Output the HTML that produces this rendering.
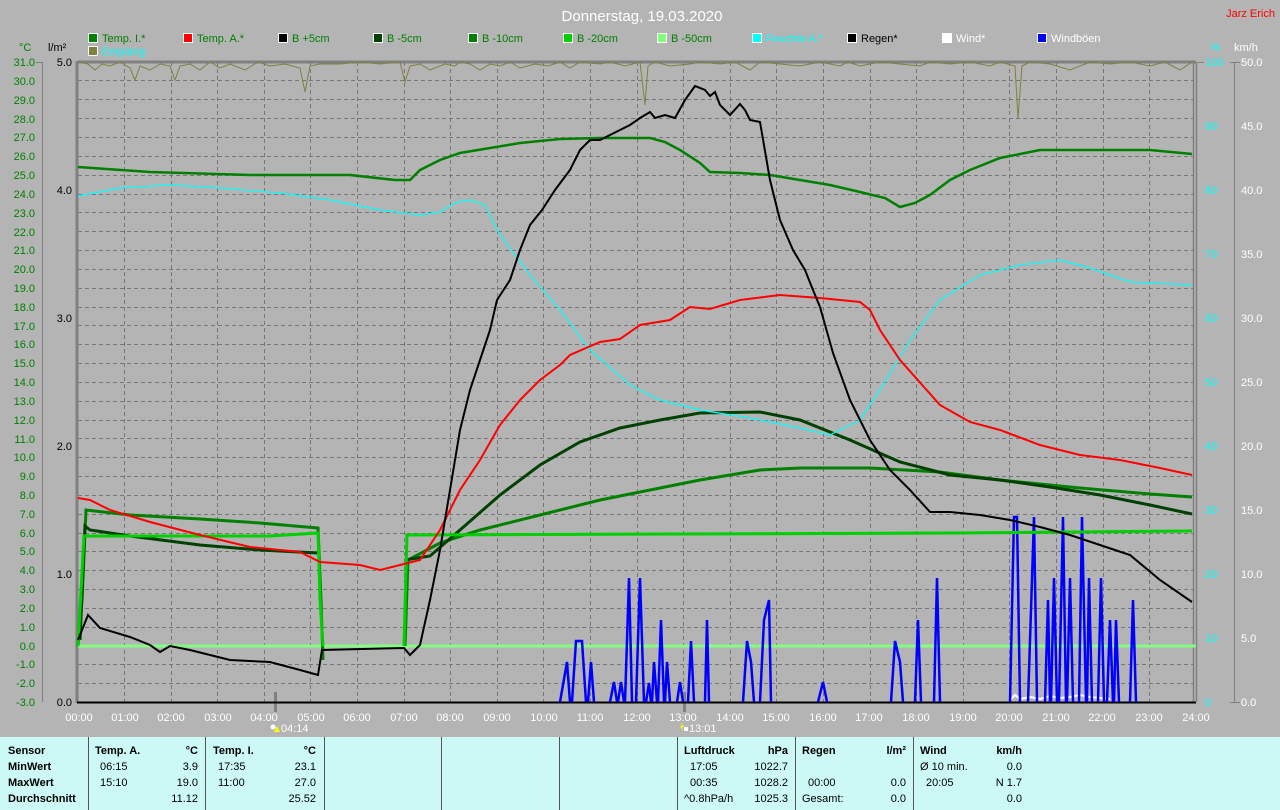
<!DOCTYPE html>
<html><head><meta charset="utf-8"><style>
body{margin:0;width:1280px;height:810px;background:#b4b4b4;overflow:hidden;font-family:"Liberation Sans",sans-serif}
svg{position:absolute;left:0;top:0}
#tbl{position:absolute;left:0;top:737px;width:1280px;height:73px;background:#ccf9f5}
.d{position:absolute;top:0;height:73px;width:1px;background:#555}
.t{position:absolute;font-size:11px;color:#000;white-space:nowrap}
.b{font-weight:bold}
.r{text-align:right}
</style></head><body>
<svg width="1280" height="737" font-family="Liberation Sans, sans-serif" font-size="11">
<text x="642" y="21" fill="#fff" font-size="15" text-anchor="middle">Donnerstag, 19.03.2020</text>
<text x="1275" y="17" fill="#f00" font-size="11" text-anchor="end">Jarz Erich</text>
<g font-size="11">
<rect x="88.5" y="33.5" width="9" height="9" fill="#008000" stroke="#fff"/><text x="102" y="42" fill="#008000">Temp. I.*</text>
<rect x="183.5" y="33.5" width="9" height="9" fill="#f00" stroke="#fff"/><text x="197" y="42" fill="#008000">Temp. A.*</text>
<rect x="278.5" y="33.5" width="9" height="9" fill="#000" stroke="#fff"/><text x="292" y="42" fill="#008000">B +5cm</text>
<rect x="373.5" y="33.5" width="9" height="9" fill="#004000" stroke="#fff"/><text x="387" y="42" fill="#008000">B -5cm</text>
<rect x="468.5" y="33.5" width="9" height="9" fill="#008000" stroke="#fff"/><text x="482" y="42" fill="#008000">B -10cm</text>
<rect x="563.5" y="33.5" width="9" height="9" fill="#00d000" stroke="#fff"/><text x="577" y="42" fill="#008000">B -20cm</text>
<rect x="657.5" y="33.5" width="9" height="9" fill="#80ff80" stroke="#fff"/><text x="671" y="42" fill="#008000">B -50cm</text>
<rect x="752.5" y="33.5" width="9" height="9" fill="#0ff" stroke="#fff"/><text x="766" y="42" fill="#0ff">Feuchte A.*</text>
<rect x="847.5" y="33.5" width="9" height="9" fill="#000" stroke="#fff"/><text x="861" y="42" fill="#000">Regen*</text>
<rect x="942.5" y="33.5" width="9" height="9" fill="#fff" stroke="#fff"/><text x="956" y="42" fill="#fff">Wind*</text>
<rect x="1037.5" y="33.5" width="9" height="9" fill="#00f" stroke="#fff"/><text x="1051" y="42" fill="#fff">Windböen</text>
<rect x="88.5" y="46.5" width="9" height="9" fill="#808040" stroke="#fff"/><text x="102" y="55" fill="#0ff">Emplang</text>
</g>
<text x="19" y="51" fill="#008000">°C</text>
<text x="48" y="51" fill="#000">l/m²</text>
<text x="1211" y="51" fill="#0ff">%</text>
<text x="1234" y="51" fill="#fff">km/h</text>
<!-- grid -->
<g stroke="#777" stroke-dasharray="4,3" stroke-width="1">
<path d="M78 80.5H1193M78 99.5H1193M78 118.5H1193M78 137.5H1193M78 156.5H1193M78 175.5H1193M78 194.5H1193M78 212.5H1193M78 231.5H1193M78 250.5H1193M78 269.5H1193M78 288.5H1193M78 307.5H1193M78 325.5H1193M78 344.5H1193M78 363.5H1193M78 382.5H1193M78 401.5H1193M78 420.5H1193M78 438.5H1193M78 457.5H1193M78 476.5H1193M78 495.5H1193M78 514.5H1193M78 533.5H1193M78 551.5H1193M78 570.5H1193M78 589.5H1193M78 608.5H1193M78 627.5H1193M78 646.5H1193M78 664.5H1193M78 683.5H1193"/>
<path d="M124.5 62V702M171.5 62V702M217.5 62V702M264.5 62V702M310.5 62V702M357.5 62V702M404.5 62V702M450.5 62V702M497.5 62V702M543.5 62V702M590.5 62V702M637.5 62V702M683.5 62V702M730.5 62V702M776.5 62V702M823.5 62V702M870.5 62V702M916.5 62V702M963.5 62V702M1009.5 62V702M1056.5 62V702M1103.5 62V702M1149.5 62V702"/>
</g>
<!-- axes -->
<g stroke="#808080" fill="none">
<path d="M42.5 62V702M36 62.5H42" />
<path d="M77 61V703" stroke-width="3"/>
<path d="M78 62H1196" stroke-width="3"/>
<path d="M1193.5 62V702M1196.5 62V702" stroke-width="1.5"/>
<path d="M1234.5 62V702M1230 62.5H1240M1230 702.5H1240M1198 62.5H1204"/>
<path d="M275.5 692V712M684.5 692V712" stroke-width="3"/>
</g>
<path d="M77 702.5H1196" stroke="#000" stroke-width="2"/>
<!-- left labels -->
<g fill="#008000" text-anchor="end">
<text x="35" y="66">31.0</text><text x="35" y="85">30.0</text><text x="35" y="104">29.0</text><text x="35" y="123">28.0</text><text x="35" y="141">27.0</text><text x="35" y="160">26.0</text><text x="35" y="179">25.0</text><text x="35" y="198">24.0</text><text x="35" y="217">23.0</text><text x="35" y="236">22.0</text><text x="35" y="254">21.0</text><text x="35" y="273">20.0</text><text x="35" y="292">19.0</text><text x="35" y="311">18.0</text><text x="35" y="330">17.0</text><text x="35" y="348">16.0</text><text x="35" y="367">15.0</text><text x="35" y="386">14.0</text><text x="35" y="405">13.0</text><text x="35" y="424">12.0</text><text x="35" y="443">11.0</text><text x="35" y="461">10.0</text><text x="35" y="480">9.0</text><text x="35" y="499">8.0</text><text x="35" y="518">7.0</text><text x="35" y="537">6.0</text><text x="35" y="555">5.0</text><text x="35" y="574">4.0</text><text x="35" y="593">3.0</text><text x="35" y="612">2.0</text><text x="35" y="631">1.0</text><text x="35" y="650">0.0</text><text x="35" y="668">-1.0</text><text x="35" y="687">-2.0</text><text x="35" y="706">-3.0</text>
</g>
<g fill="#000" text-anchor="end">
<text x="72" y="66">5.0</text><text x="72" y="194">4.0</text><text x="72" y="322">3.0</text><text x="72" y="450">2.0</text><text x="72" y="578">1.0</text><text x="72" y="706">0.0</text>
</g>
<g fill="#0ff">
<text x="1205" y="66">100</text><text x="1205" y="130">90</text><text x="1205" y="194">80</text><text x="1205" y="258">70</text><text x="1205" y="322">60</text><text x="1205" y="386">50</text><text x="1205" y="450">40</text><text x="1205" y="514">30</text><text x="1205" y="578">20</text><text x="1205" y="642">10</text><text x="1205" y="706">0</text>
</g>
<g fill="#fff">
<text x="1241" y="66">50.0</text><text x="1241" y="130">45.0</text><text x="1241" y="194">40.0</text><text x="1241" y="258">35.0</text><text x="1241" y="322">30.0</text><text x="1241" y="386">25.0</text><text x="1241" y="450">20.0</text><text x="1241" y="514">15.0</text><text x="1241" y="578">10.0</text><text x="1241" y="642">5.0</text><text x="1241" y="706">0.0</text>
</g>
<g fill="#fff" text-anchor="middle">
<text x="79" y="721">00:00</text><text x="125" y="721">01:00</text><text x="171" y="721">02:00</text><text x="218" y="721">03:00</text><text x="264" y="721">04:00</text><text x="311" y="721">05:00</text><text x="357" y="721">06:00</text><text x="404" y="721">07:00</text><text x="450" y="721">08:00</text><text x="497" y="721">09:00</text><text x="544" y="721">10:00</text><text x="590" y="721">11:00</text><text x="637" y="721">12:00</text><text x="683" y="721">13:00</text><text x="730" y="721">14:00</text><text x="776" y="721">15:00</text><text x="823" y="721">16:00</text><text x="869" y="721">17:00</text><text x="916" y="721">18:00</text><text x="963" y="721">19:00</text><text x="1009" y="721">20:00</text><text x="1056" y="721">21:00</text><text x="1102" y="721">22:00</text><text x="1149" y="721">23:00</text><text x="1196" y="721">24:00</text>
</g>
<circle cx="273" cy="727" r="2.5" fill="#fff"/><path d="M274 732l3-6 3 6z" fill="#ff0"/>
<text x="281" y="732" fill="#fff">04:14</text>
<path d="M681 722l3 5h-2l1 4-3-5h2z" fill="#ff0"/><rect x="684" y="727" width="4" height="4" fill="#fff"/>
<text x="689" y="732" fill="#fff">13:01</text>
<!-- emplang -->
<polyline fill="none" stroke="#808040" stroke-width="1" points="78,62 88,64 95,70 102,64 110,66 120,62 130,68 135,80 140,66 150,70 160,64 170,66 175,80 180,66 190,64 200,70 210,62 220,68 230,64 245,70 258,62 270,66 285,64 300,68 305,92 310,66 320,64 340,64 360,62 380,64 400,62 405,82 410,66 420,64 430,70 445,64 455,66 460,62 470,64 480,70 490,64 500,66 510,62 520,68 535,64 548,66 560,62 570,68 580,62 600,64 610,62 625,66 640,62 645,105 648,66 655,62 670,66 690,64 700,62 720,64 735,62 750,70 760,62 780,64 800,66 820,62 840,66 848,62 860,66 880,62 900,64 920,66 930,62 950,64 970,62 990,66 1000,62 1015,66 1018,118 1022,66 1030,62 1050,64 1070,70 1090,62 1110,64 1130,62 1150,66 1165,62 1180,70 1192,62"/>
<!-- B -50 -->
<path d="M78 646H1196" stroke="#80ff80" stroke-width="3"/>
<!-- wind white -->
<polyline fill="none" stroke="#fff" stroke-width="2" points="1010,700 1015,695 1020,699 1030,697 1040,699 1050,696 1060,698 1070,697 1080,695 1090,697 1100,698 1110,699"/>
<!-- wind gusts -->
<path fill="none" stroke="#00f" stroke-width="2.5" d="M560 702L567 662L570 702M572 702L576 641L582 641L586 702M588 702L591 662L594 702M610 702L614 682L617 702M618 702L621 682L624 702M625 702L629 578L632 702M636 702L640 578L644 702M646 702L649 683L651 702M652 702L654 662L657 702M658 702L661 620L664 702M665 702L667 662L670 702M677 702L680 682L683 702M688 702L691 641L694 702M705 702L707 620L709 702M743 702L747 641L751 662L754 702M760 702L764 620L769 600L771 702M818 702L823 682L827 702M891 702L895 641L900 662L903 702M915 702L918 620L921 702M934 702L937 578L940 702M1010 702L1014 517L1017 517L1020 702M1028 702L1031 610L1034 517L1037 702M1045 702L1048 600L1050 702M1051 702L1054 578L1057 702M1059 702L1063 517L1066 702M1067 702L1070 578L1073 702M1079 702L1082 517L1086 702M1087 702L1089 578L1092 702M1098 702L1101 578L1104 702M1107 702L1110 620L1113 702M1114 702L1116 620L1119 702M1130 702L1133 600L1136 702"/>
<!-- temp I -->
<polyline fill="none" stroke="#008000" stroke-width="2.5" points="78,167 150,172 250,175 350,175 395,180 410,180 420,170 440,160 460,153 490,148 520,143 560,139 600,138 650,138 665,142 680,150 700,163 710,172 740,173 770,175 800,180 830,185 860,192 885,198 900,207 915,203 930,195 950,180 970,170 1000,158 1040,150 1150,150 1192,154"/>
<!-- B-10 -->
<polyline fill="none" stroke="#008000" stroke-width="3" points="78,646 82,600 86,510 130,515 200,519 260,523 318,528 321,600 323,660"/>
<polyline fill="none" stroke="#008000" stroke-width="3" points="405,646 408,560 440,543 480,530 540,515 600,500 650,490 700,480 760,470 800,468 870,468 940,472 1000,480 1080,488 1150,494 1192,497"/>
<!-- B-5 -->
<polyline fill="none" stroke="#004000" stroke-width="3" points="80,640 85,526 90,530 130,536 200,545 260,550 318,553"/>
<polyline fill="none" stroke="#004000" stroke-width="3" points="405,560 430,556 460,530 500,495 540,465 580,442 620,428 660,420 700,413 760,412 800,420 850,440 900,462 950,475 1000,480 1050,487 1100,495 1150,505 1192,514"/>
<!-- B-20 -->
<polyline fill="none" stroke="#00d000" stroke-width="3" points="78,646 84,536 270,536 318,533 320,600 323,646"/>
<polyline fill="none" stroke="#00d000" stroke-width="3" points="404,646 407,535 960,533 1192,531"/>
<!-- humidity -->
<polyline fill="none" stroke="#0ff" stroke-width="1.2" points="78,196 120,188 170,185 220,188 280,193 330,200 380,210 420,215 440,212 455,203 470,200 485,205 497,230 510,248 530,275 560,310 590,350 630,385 660,400 700,410 750,418 800,428 830,435 860,420 880,390 910,340 940,300 980,275 1020,265 1060,260 1090,268 1130,282 1192,285"/>
<!-- temp A -->
<polyline fill="none" stroke="#f00" stroke-width="2" points="78,498 90,500 110,510 150,522 200,535 250,547 300,552 320,562 360,565 380,570 400,565 420,560 440,530 460,490 480,460 500,425 520,400 540,380 560,365 570,355 600,342 620,339 640,325 670,320 690,307 710,309 740,300 780,295 820,298 860,302 870,310 880,330 900,360 940,405 970,422 1000,430 1040,445 1080,455 1120,460 1160,468 1192,475"/>
<!-- B+5 -->
<polyline fill="none" stroke="#000" stroke-width="2" points="78,640 88,615 100,628 130,637 150,645 160,652 170,646 190,650 230,660 270,662 300,670 318,675 322,650 404,648 410,655 420,645 430,600 440,550 450,490 460,430 470,390 480,360 490,330 497,300 510,280 520,250 530,225 542,210 555,190 570,170 580,150 590,140 600,140 610,135 620,130 630,125 640,118 650,112 655,118 665,115 675,118 685,100 695,86 705,90 710,96 715,92 720,105 730,115 740,104 745,110 750,120 760,122 770,180 780,220 793,250 805,270 813,290 820,307 833,353 850,400 870,440 890,470 910,490 930,512 950,512 980,515 1010,520 1040,527 1070,535 1100,545 1130,555 1160,580 1192,602"/>
</svg>
<div id="tbl">
<div class="d" style="left:88px"></div><div class="d" style="left:205px"></div><div class="d" style="left:324px"></div><div class="d" style="left:441px"></div><div class="d" style="left:559px"></div><div class="d" style="left:677px"></div><div class="d" style="left:795px"></div><div class="d" style="left:913px"></div>
<div class="t b" style="left:8px;top:8px">Sensor</div><div class="t b" style="left:8px;top:24px">MinWert</div><div class="t b" style="left:8px;top:40px">MaxWert</div><div class="t b" style="left:8px;top:56px">Durchschnitt</div>
<div class="t b" style="left:95px;top:8px">Temp. A.</div><div class="t b r" style="left:150px;width:48px;top:8px">°C</div>
<div class="t" style="left:100px;top:24px">06:15</div><div class="t r" style="left:150px;width:48px;top:24px">3.9</div>
<div class="t" style="left:100px;top:40px">15:10</div><div class="t r" style="left:150px;width:48px;top:40px">19.0</div>
<div class="t r" style="left:150px;width:48px;top:56px">11.12</div>
<div class="t b" style="left:213px;top:8px">Temp. I.</div><div class="t b r" style="left:268px;width:48px;top:8px">°C</div>
<div class="t" style="left:218px;top:24px">17:35</div><div class="t r" style="left:268px;width:48px;top:24px">23.1</div>
<div class="t" style="left:218px;top:40px">11:00</div><div class="t r" style="left:268px;width:48px;top:40px">27.0</div>
<div class="t r" style="left:268px;width:48px;top:56px">25.52</div>
<div class="t b" style="left:684px;top:8px">Luftdruck</div><div class="t b r" style="left:740px;width:48px;top:8px">hPa</div>
<div class="t" style="left:690px;top:24px">17:05</div><div class="t r" style="left:740px;width:48px;top:24px">1022.7</div>
<div class="t" style="left:690px;top:40px">00:35</div><div class="t r" style="left:740px;width:48px;top:40px">1028.2</div>
<div class="t" style="left:684px;top:56px">^0.8hPa/h</div><div class="t r" style="left:740px;width:48px;top:56px">1025.3</div>
<div class="t b" style="left:802px;top:8px">Regen</div><div class="t b r" style="left:858px;width:48px;top:8px">l/m²</div>
<div class="t" style="left:808px;top:40px">00:00</div><div class="t r" style="left:858px;width:48px;top:40px">0.0</div>
<div class="t" style="left:802px;top:56px">Gesamt:</div><div class="t r" style="left:858px;width:48px;top:56px">0.0</div>
<div class="t b" style="left:920px;top:8px">Wind</div><div class="t b r" style="left:974px;width:48px;top:8px">km/h</div>
<div class="t" style="left:920px;top:24px">Ø 10 min.</div><div class="t r" style="left:974px;width:48px;top:24px">0.0</div>
<div class="t" style="left:926px;top:40px">20:05</div><div class="t r" style="left:974px;width:48px;top:40px">N 1.7</div>
<div class="t r" style="left:974px;width:48px;top:56px">0.0</div>
</div>
</body></html>
